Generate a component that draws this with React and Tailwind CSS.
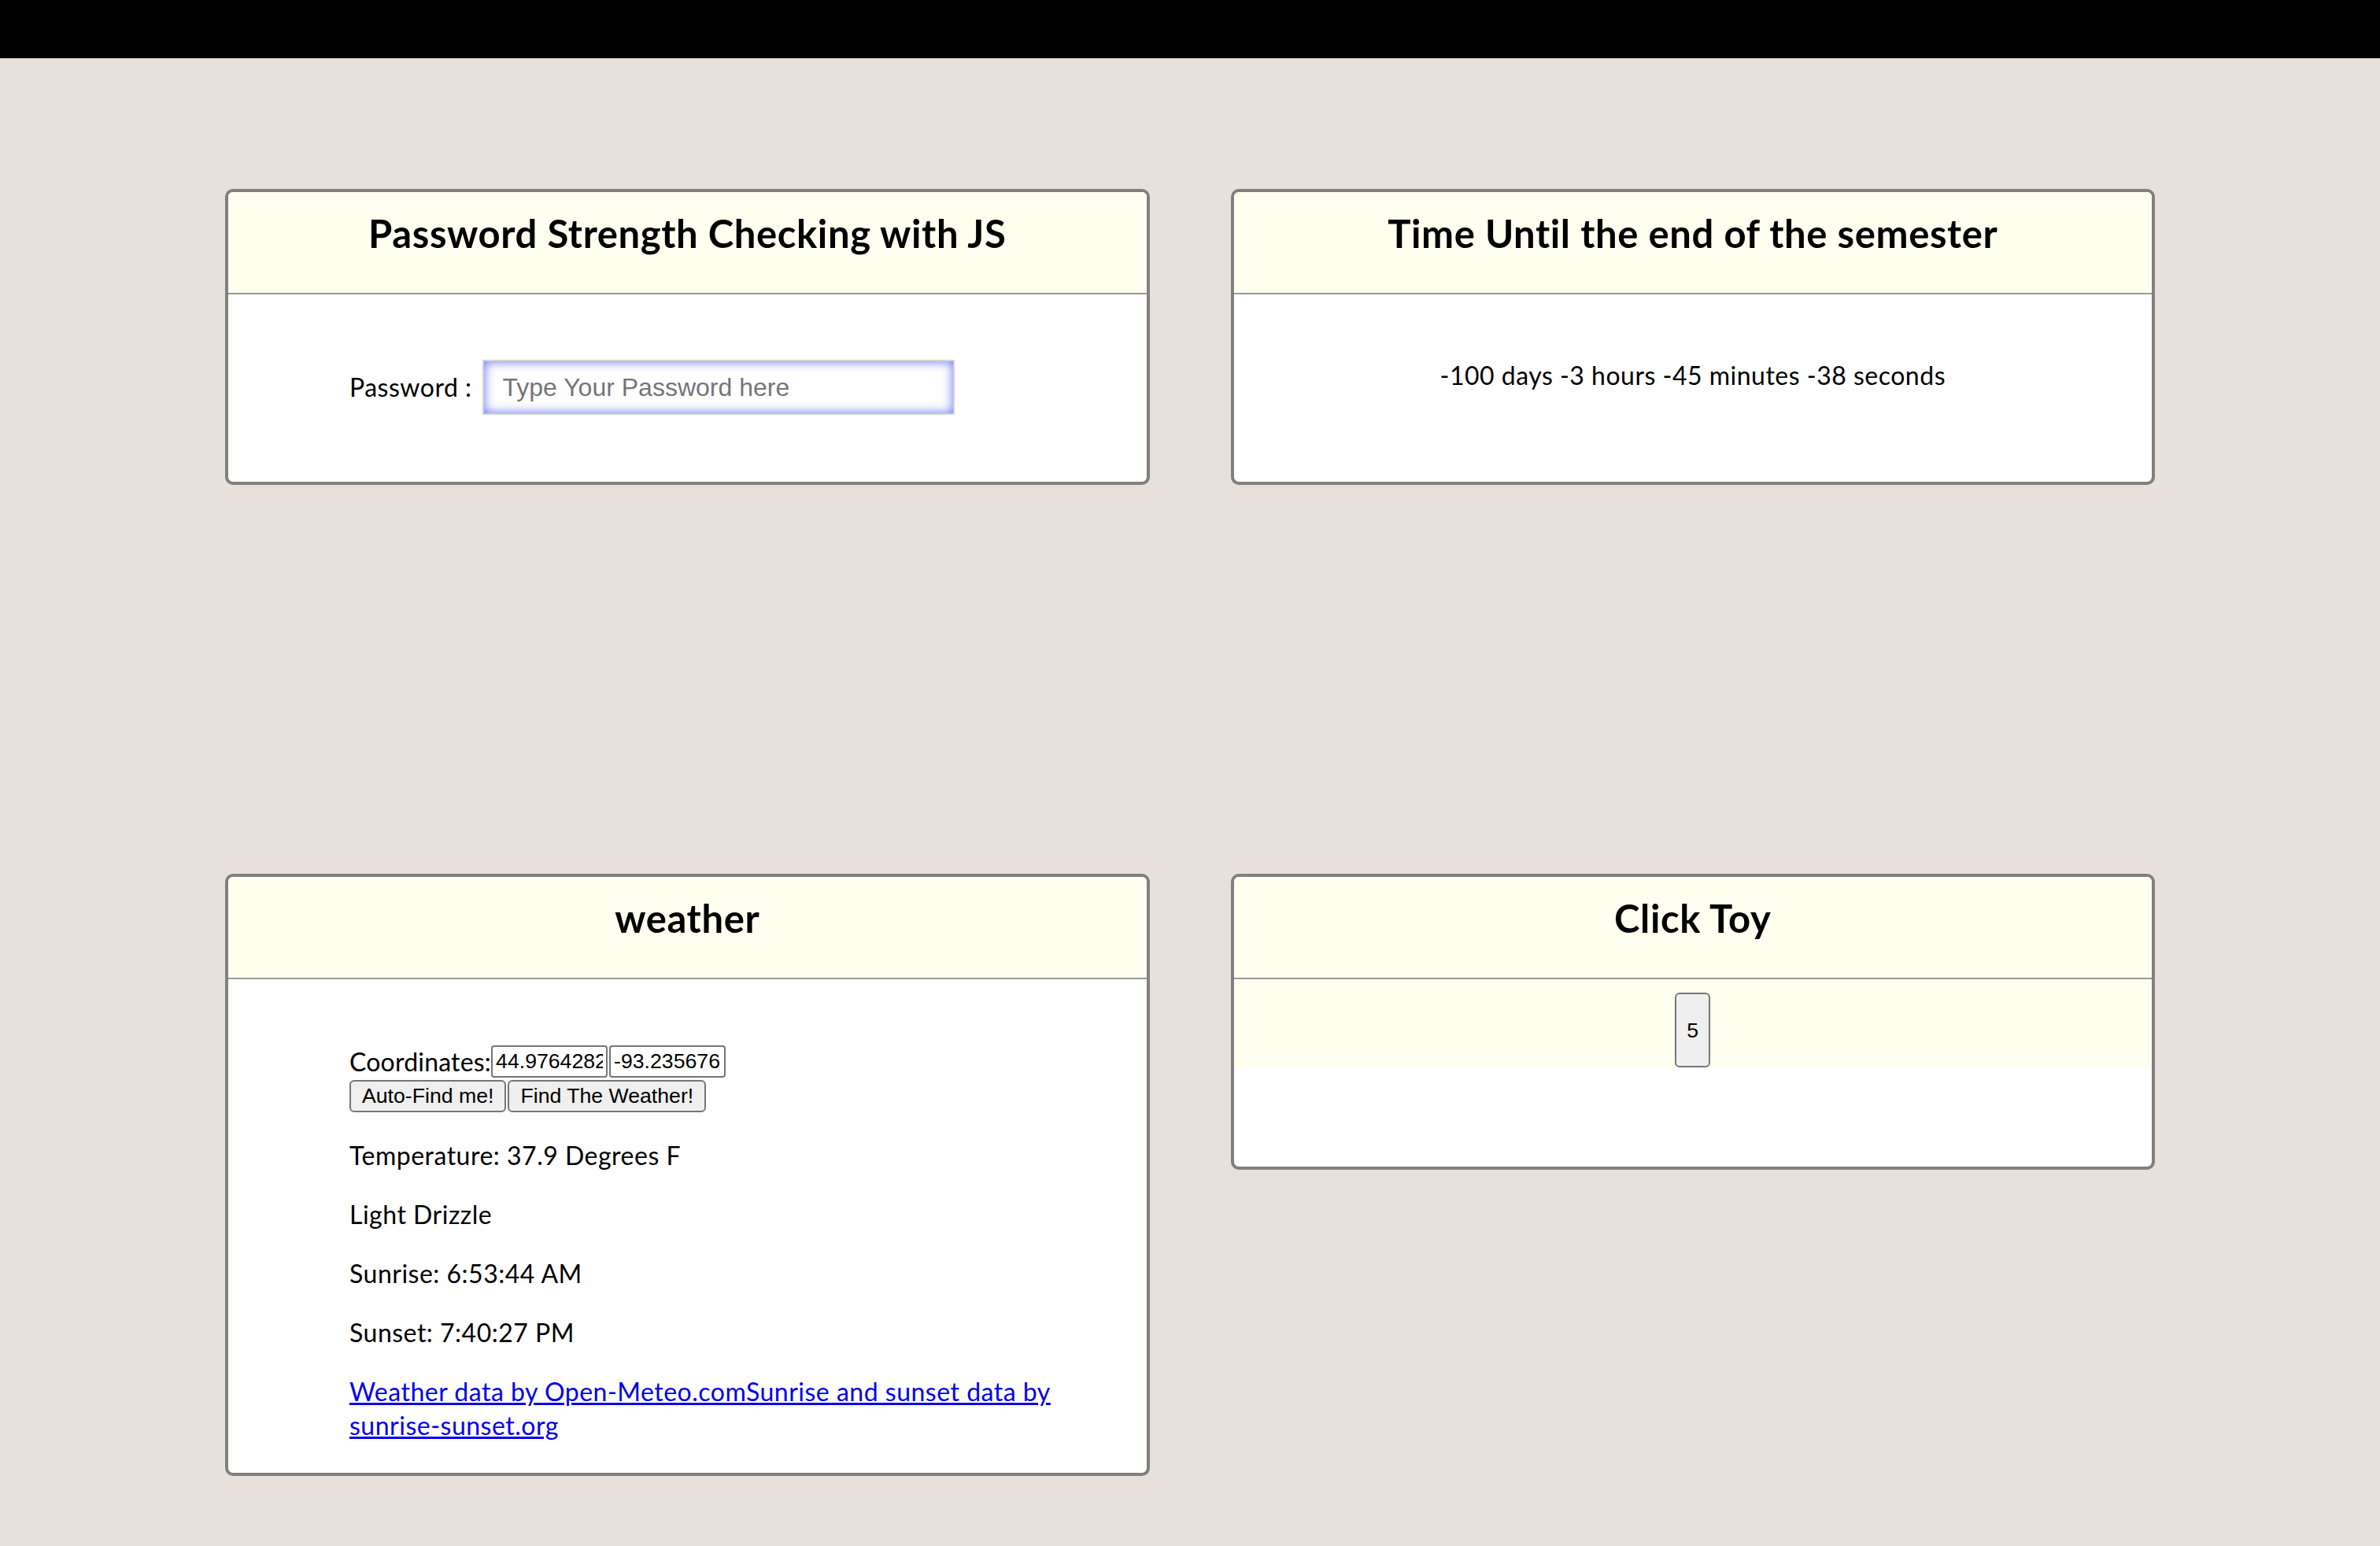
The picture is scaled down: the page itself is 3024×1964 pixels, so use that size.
import React from 'react';

const body = "font-['Lato','Noto_Sans',sans-serif]";
const ctrl = "font-['Liberation_Sans',Arial,sans-serif] tracking-normal";

function Card({ title, children }) {
  return (
    <div className="flex min-h-[376px] flex-col overflow-hidden rounded-[10px] border-4 border-[#808080] bg-white">
      <div className="h-[130px] shrink-0 border-b-2 border-[#999999] bg-[#fffff0] pt-[28px] text-center">
        <h2 className="text-[49px] font-bold leading-none tracking-[0.6px] text-black">{title}</h2>
      </div>
      {children}
    </div>
  );
}

export default function App() {
  return (
    <div className={`min-h-screen bg-[#e8e0da] tracking-[0.5px] text-black ${body}`}>
      <div className="h-[74px] bg-black" />

      <div className="grid grid-cols-2 items-start gap-x-[103px] gap-y-[494px] px-[286px] pt-[166px] pb-[80px]">
        {/* Password */}
        <Card title="Password Strength Checking with JS">
          <div className="flex items-center gap-[13px] pl-[154px] pt-[83px] text-[32px]">
            <label>Password :</label>
            <input
              type="password"
              placeholder="Type Your Password here"
              className={`h-[70px] w-[600px] border-2 border-[#d4d4d4] bg-white px-[24px] text-[32px] text-black placeholder:text-[#757575] shadow-[inset_0_0_14px_rgba(40,60,255,0.75)] outline-none ${ctrl}`}
            />
          </div>
        </Card>

        {/* Countdown */}
        <Card title="Time Until the end of the semester">
          <p className="pt-[82px] text-center text-[32px] leading-[42px]">
            -100 days -3 hours -45 minutes -38 seconds
          </p>
        </Card>

        {/* Weather */}
        <Card title="weather">
          <div className="pl-[154px] pr-[80px] pt-[83px] pb-[7px] text-[32px] leading-[43px]">
            <div className="flex items-center">
              <span className="tracking-[0.2px]">Coordinates:</span>
              <input
                readOnly
                value="44.97642827"
                className={`h-[41px] w-[148px] rounded-[4px] border-2 border-[#767676] bg-white px-[4px] text-[26.67px] text-black ${ctrl}`}
              />
              <input
                readOnly
                value="-93.235676"
                className={`ml-[2px] h-[41px] w-[148px] rounded-[4px] border-2 border-[#767676] bg-white px-[4px] text-[26.67px] text-black ${ctrl}`}
              />
            </div>
            <div className="mt-[2px] flex gap-[2px]">
              <button className={`h-[41px] rounded-[6px] border-2 border-[#767676] bg-[#efefef] px-[14px] text-[26.67px] leading-none text-black ${ctrl}`}>
                Auto-Find me!
              </button>
              <button className={`h-[41px] rounded-[6px] border-2 border-[#767676] bg-[#efefef] px-[14px] text-[26.67px] leading-none text-black ${ctrl}`}>
                Find The Weather!
              </button>
            </div>
            <p className="mt-[33px]">Temperature: 37.9 Degrees F</p>
            <p className="mt-[32px]">Light Drizzle</p>
            <p className="mt-[32px]">Sunrise: 6:53:44 AM</p>
            <p className="mt-[32px]">Sunset: 7:40:27 PM</p>
            <p className="mt-[32px] mb-[32px]">
              <a href="#" className="text-[#0000ee] underline">Weather data by Open-Meteo.com</a>
              <a href="#" className="text-[#0000ee] underline">Sunrise and sunset data by sunrise-sunset.org</a>
            </p>
          </div>
        </Card>

        {/* Click toy */}
        <Card title="Click Toy">
          <div className="flex h-[112px] justify-center bg-[#fffff0] pt-[17px]">
            <button className={`h-[95px] w-[45px] rounded-[6px] border-2 border-[#767676] bg-[#efefef] text-[26.67px] text-black ${ctrl}`}>
              5
            </button>
          </div>
        </Card>
      </div>
    </div>
  );
}
